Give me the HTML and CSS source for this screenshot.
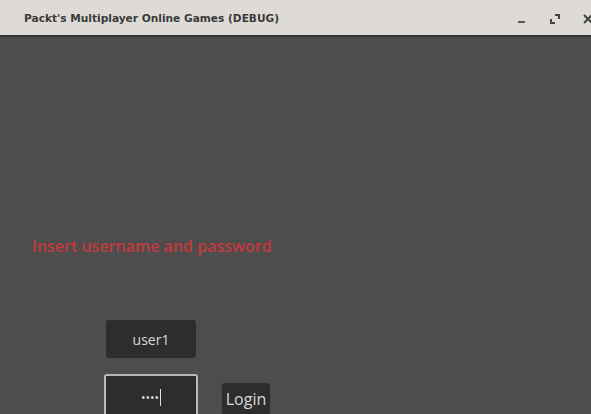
FILE: index.html
```html
<!DOCTYPE html>
<html>
<head>
<meta charset="utf-8">
<link rel="stylesheet" href="styles.css">
</head>
<body>
<div class="titlebar">
  <div class="title">Packt's Multiplayer Online Games (DEBUG)</div>
  <div class="controls">
    <svg class="ctl" width="12" height="12" viewBox="0 0 12 12"><rect x="2" y="8" width="7" height="2" fill="#555"/></svg>
    <svg class="ctl" width="12" height="12" viewBox="0 0 12 12"><path d="M6 2h4v4M2 6v4h4" stroke="#444" stroke-width="2" fill="none"/></svg>
    <svg class="ctl" width="12" height="12" viewBox="0 0 12 12"><path d="M2 2L10 10M10 2L2 10" stroke="#444" stroke-width="2"/></svg>
  </div>
</div>
<div class="main">
  <div class="message">Insert username and password</div>
  <div class="form">
    <div class="field user">user1</div>
    <div class="row">
      <div class="field pass"><span class="dots">••••</span><span class="caret"></span></div>
      <div class="btn">Login</div>
    </div>
  </div>
</div>
</body>
</html>
```
FILE: styles.css
```css
html, body { margin: 0; padding: 0; }
body {
  width: 591px; height: 414px; overflow: hidden;
  background: #4d4d4d;
  font-family: "Open Sans", "Noto Sans", sans-serif;
}
.titlebar {
  height: 35px;
  background: #dedbd6;
  border-bottom: 2px solid #353535;
  display: flex;
  align-items: center;
  justify-content: space-between;
  padding: 0 0 0 24px;
}
.title {
  font-family: "DejaVu Sans", sans-serif;
  font-weight: bold;
  font-size: 10.6px;
  color: #3a3a3a;
  padding-top: 1px;
}
.controls { display: flex; gap: 21px; align-items: center; padding-top: 2px; margin-right: -3px; }
.ctl { display: block; }
.main { height: 377px; display: flex; flex-direction: column; }
.message {
  margin: 199px 0 0 32px;
  color: #c4393e;
  font-size: 16px;
  font-weight: 600;
  line-height: 20px;
}
.form { margin-top: 64px; display: flex; flex-direction: column; }
.field {
  background: #2d2d2d;
  color: #d8d8d8;
  border-radius: 3px;
  display: flex; align-items: center; justify-content: center;
  font-size: 14px;
}
.user { margin-left: 106px; width: 90px; height: 38px; }
.row { display: flex; align-items: flex-start; margin-top: 16px; }
.pass {
  margin-left: 104px; width: 90px; height: 42px;
  border: 2px solid #b9b9b9;
}
.dots { font-size: 12px; letter-spacing: 0px; color: #d8d8d8; }
.caret { display: inline-block; width: 1px; height: 17px; background: #e0e0e0; margin-left: 1px; }
.btn {
  margin: 9px 0 0 24px;
  background: #2d2d2d; color: #d8d8d8;
  border-radius: 3px;
  width: 48px; height: 32px;
  display: flex; align-items: center; justify-content: center;
  font-size: 16px;
}
```
